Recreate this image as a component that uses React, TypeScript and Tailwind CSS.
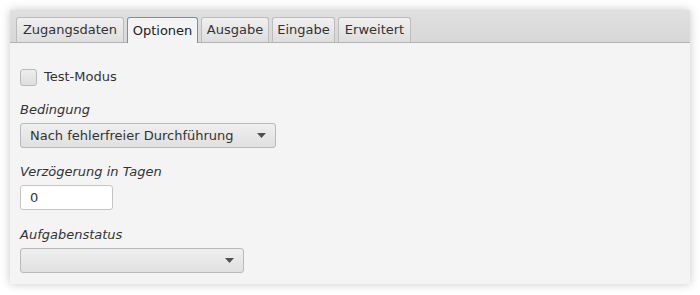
import React from 'react';

const tabs = [
  { label: 'Zugangsdaten', w: 'w-[108px]' },
  { label: 'Optionen', w: 'w-[71px]' },
  { label: 'Ausgabe', w: 'w-[68px]' },
  { label: 'Eingabe', w: 'w-[63px]' },
  { label: 'Erweitert', w: 'w-[73px]' },
];

const Arrow = () => (
  <svg width="9" height="5" viewBox="0 0 9 5" className="shrink-0">
    <path d="M0 0 H9 L4.5 5 Z" fill="#505050" />
  </svg>
);

export default function App() {
  return (
    <div className="w-[700px] h-[295px] bg-white p-[10px] font-['DejaVu_Sans',sans-serif] text-[13px] text-[#333]">
      <div className="h-[274px] bg-[#f4f4f4] shadow-[0_0_9px_rgba(0,0,0,0.22)] flex flex-col">
        <div className="h-[33px] bg-gradient-to-b from-[#e0e0e0] to-[#d8d8d8] border-b border-[#b2b2b2] flex items-end px-[6px] gap-[3px]">
          {tabs.map((t) =>
            t.label === 'Optionen' ? (
              <div
                key={t.label}
                className={`${t.w} h-[26px] -mb-px flex items-center justify-center whitespace-nowrap bg-[#f4f4f4] border border-b-0 border-[#3fa2d9] rounded-t-[3px] text-[#222]`}
              >
                {t.label}
              </div>
            ) : (
              <div
                key={t.label}
                className={`${t.w} h-[25px] flex items-center justify-center whitespace-nowrap bg-gradient-to-b from-[#f0f0f0] to-[#dedede] border border-b-0 border-[#bcbcbc] rounded-t-[3px] text-[#333]`}
              >
                {t.label}
              </div>
            )
          )}
        </div>
        <div className="flex flex-col pl-[10px] pt-[25px]">
          <div className="flex items-center gap-[7px] h-[18px]">
            <div className="w-[17px] h-[17px] rounded-[3px] border border-[#b9b9b9] bg-gradient-to-b from-[#eeeeee] to-[#dedede]" />
            <span>Test-Modus</span>
          </div>
          <div className="mt-[16px] italic leading-[16px]">Bedingung</div>
          <div className="mt-[5px] w-[256px] h-[25px] rounded-[3px] border border-[#b9b9b9] bg-gradient-to-b from-[#efefef] to-[#e0e0e0] flex items-center justify-between pl-[9px] pr-[9px]">
            <span>Nach fehlerfreier Durchführung</span>
            <Arrow />
          </div>
          <div className="mt-[16px] italic leading-[16px]">Verzögerung in Tagen</div>
          <div className="mt-[5px] w-[93px] h-[25px] rounded-[3px] border border-[#c4c4c4] bg-white flex items-center pl-[9px]">
            0
          </div>
          <div className="mt-[17px] italic leading-[16px]">Aufgabenstatus</div>
          <div className="mt-[5px] w-[224px] h-[25px] rounded-[3px] border border-[#b9b9b9] bg-gradient-to-b from-[#efefef] to-[#e0e0e0] flex items-center justify-end pr-[9px]">
            <Arrow />
          </div>
        </div>
      </div>
    </div>
  );
}
